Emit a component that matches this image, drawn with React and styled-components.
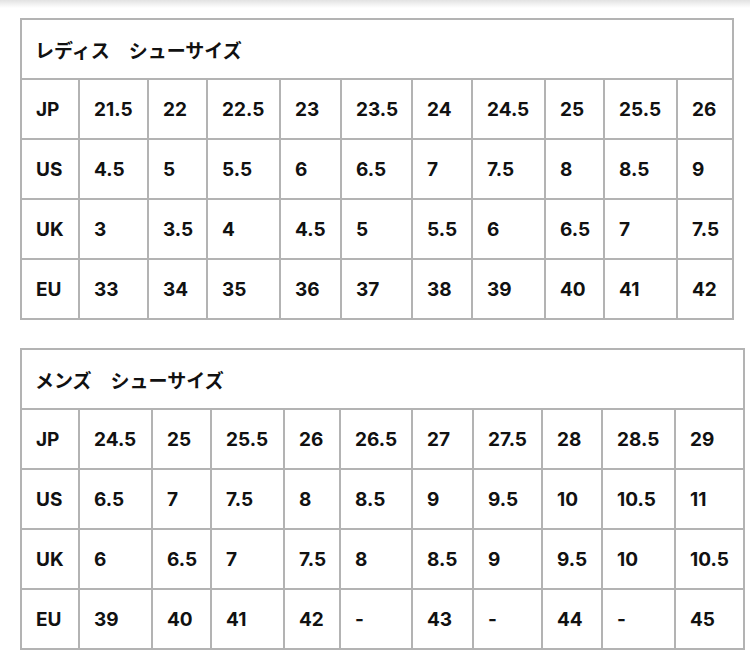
import React from 'react';
import styled, { createGlobalStyle } from 'styled-components';

const GlobalStyle = createGlobalStyle`
  body {
    margin: 0;
    background: #ffffff;
    font-family: Inter, "Noto Sans CJK JP", sans-serif;
    color: #111111;
  }
`;

const charts = [
  {
    title: 'レディス　シューサイズ',
    widths: [58, 69, 59, 73, 61, 71, 60, 73, 59, 73, 56],
    rows: [
      ['JP', '21.5', '22', '22.5', '23', '23.5', '24', '24.5', '25', '25.5', '26'],
      ['US', '4.5', '5', '5.5', '6', '6.5', '7', '7.5', '8', '8.5', '9'],
      ['UK', '3', '3.5', '4', '4.5', '5', '5.5', '6', '6.5', '7', '7.5'],
      ['EU', '33', '34', '35', '36', '37', '38', '39', '40', '41', '42'],
    ],
  },
  {
    title: 'メンズ　シューサイズ',
    widths: [58, 73, 59, 73, 56, 72, 61, 69, 60, 73, 69],
    rows: [
      ['JP', '24.5', '25', '25.5', '26', '26.5', '27', '27.5', '28', '28.5', '29'],
      ['US', '6.5', '7', '7.5', '8', '8.5', '9', '9.5', '10', '10.5', '11'],
      ['UK', '6', '6.5', '7', '7.5', '8', '8.5', '9', '9.5', '10', '10.5'],
      ['EU', '39', '40', '41', '42', '-', '43', '-', '44', '-', '45'],
    ],
  },
];

const SizeChart = ({ title, widths, rows }) => (
  <Table>
    <colgroup>
      {widths.map((w, i) => (
        <Col key={i} $w={w} />
      ))}
    </colgroup>
    <tbody>
      <tr>
        <HeadCell colSpan={widths.length}>{title}</HeadCell>
      </tr>
      {rows.map((row) => (
        <tr key={row[0]}>
          {row.map((value, i) => (
            <Cell key={i}>{value}</Cell>
          ))}
        </tr>
      ))}
    </tbody>
  </Table>
);

const App = () => (
  <>
    <GlobalStyle />
    <TopShade />
    <Page>
      {charts.map((chart) => (
        <SizeChart key={chart.title} {...chart} />
      ))}
    </Page>
  </>
);

export default App;

const TopShade = styled.div`
  height: 8px;
  background: linear-gradient(#e2e2e2, #ffffff);
`;

const Page = styled.div`
  display: flex;
  flex-direction: column;
  align-items: flex-start;
  gap: 28px;
  padding: 10px 0 0 20px;
`;

const Table = styled.table`
  border-collapse: collapse;
  table-layout: fixed;
`;

const Col = styled.col`
  width: ${(p) => p.$w}px;
`;

const HeadCell = styled.td`
  height: 58px;
  padding: 0 0 0 13px;
  border: 2px solid #b3b3b3;
  font-family: "Noto Sans CJK JP", sans-serif;
  font-size: 19px;
  font-weight: 700;
  text-align: left;
  vertical-align: middle;
  white-space: nowrap;
`;

const Cell = styled.td`
  height: 58px;
  padding: 0 0 0 14px;
  border: 2px solid #b3b3b3;
  font-family: Inter, "Liberation Sans", sans-serif;
  font-size: 19px;
  font-weight: 700;
  text-align: left;
  vertical-align: middle;
  white-space: nowrap;
`;
